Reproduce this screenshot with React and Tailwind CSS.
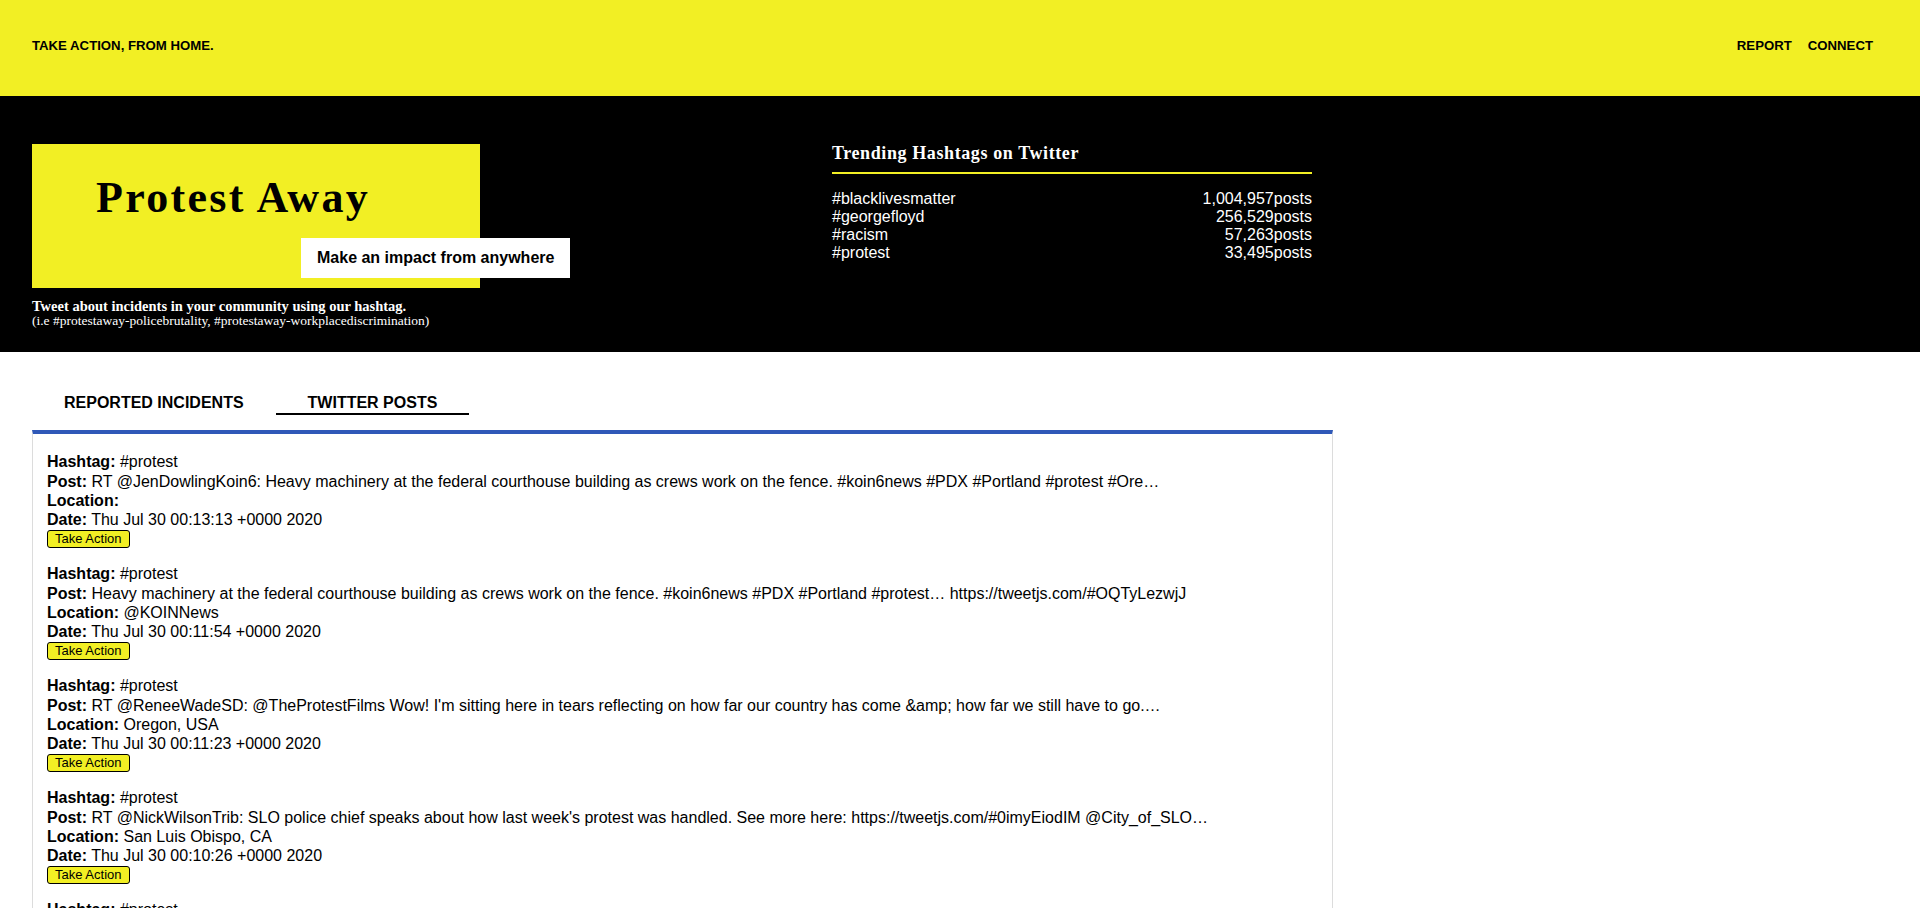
import React, { useState } from 'react';

const trending = [
  { tag: '#blacklivesmatter', count: '1,004,957' },
  { tag: '#georgefloyd', count: '256,529' },
  { tag: '#racism', count: '57,263' },
  { tag: '#protest', count: '33,495' },
];

const posts = [
  {
    hashtag: '#protest',
    post: 'RT @JenDowlingKoin6: Heavy machinery at the federal courthouse building as crews work on the fence. #koin6news #PDX #Portland #protest #Ore…',
    location: '',
    date: 'Thu Jul 30 00:13:13 +0000 2020',
  },
  {
    hashtag: '#protest',
    post: 'Heavy machinery at the federal courthouse building as crews work on the fence. #koin6news #PDX #Portland #protest… https://tweetjs.com/#OQTyLezwjJ',
    location: '@KOINNews',
    date: 'Thu Jul 30 00:11:54 +0000 2020',
  },
  {
    hashtag: '#protest',
    post: "RT @ReneeWadeSD: @TheProtestFilms Wow! I'm sitting here in tears reflecting on how far our country has come &amp; how far we still have to go.…",
    location: 'Oregon, USA',
    date: 'Thu Jul 30 00:11:23 +0000 2020',
  },
  {
    hashtag: '#protest',
    post: "RT @NickWilsonTrib: SLO police chief speaks about how last week's protest was handled. See more here: https://tweetjs.com/#0imyEiodIM @City_of_SLO…",
    location: 'San Luis Obispo, CA',
    date: 'Thu Jul 30 00:10:26 +0000 2020',
  },
  {
    hashtag: '#protest',
    post: 'RT @PDXzane: Protesters gather outside the Justice Center in downtown Portland again tonight. #PDX #Portland #protest…',
    location: 'Portland, OR',
    date: 'Thu Jul 30 00:09:41 +0000 2020',
  },
];

const sans = { fontFamily: '"Liberation Sans", Arial, sans-serif' };

const Header = () => (
  <div className="h-24 bg-[#f2ef24] flex justify-between items-start pt-[38px] pl-8 pr-[47px] text-[13.2px] leading-[15px] font-bold text-black">
    <span>TAKE ACTION, FROM HOME.</span>
    <nav className="flex gap-[16px]">
      <a href="#report">REPORT</a>
      <a href="#connect">CONNECT</a>
    </nav>
  </div>
);

const Hero = () => (
  <div className="h-64 bg-black flex pl-8 pt-12">
    <div className="w-[800px]">
      <div className="relative w-[448px] h-36 bg-[#f2ef24] pl-16 pt-8">
        <h1 className="font-['Liberation_Serif',serif] font-bold text-[44px] leading-[44px] tracking-[2.3px] text-black">
          Protest Away
        </h1>
        <div className="absolute left-[269px] top-[94px] h-10 px-4 flex items-center bg-white text-black text-base leading-[18px] font-bold whitespace-nowrap">
          Make an impact from anywhere
        </div>
      </div>
      <div className="mt-3 font-['Liberation_Serif',serif] text-white leading-[13.5px]">
        <p className="font-bold text-[14.5px]">Tweet about incidents in your community using our hashtag.</p>
        <p className="text-[13.5px]">(i.e #protestaway-policebrutality, #protestaway-workplacediscrimination)</p>
      </div>
    </div>
    <div className="w-[480px] text-white">
      <h2 className="font-['Liberation_Serif',serif] font-bold text-[18px] leading-[19.5px] tracking-[0.6px] pb-[8px] border-b-2 border-[#f2ef24]">
        Trending Hashtags on Twitter
      </h2>
      <ul className="mt-4 text-base leading-[18px]">
        {trending.map((t) => (
          <li key={t.tag} className="flex justify-between">
            <span>{t.tag}</span>
            <span>{t.count}posts</span>
          </li>
        ))}
      </ul>
    </div>
  </div>
);

const PostItem = ({ item }) => (
  <div className="mb-4">
    <div><b>Hashtag:</b> {item.hashtag}</div>
    <div className="whitespace-nowrap"><b>Post:</b> {item.post}</div>
    <div><b>Location:</b> {item.location}</div>
    <div><b>Date:</b> {item.date}</div>
    <div className="h-[19.2px] flex items-center">
      <button className="h-[18px] px-[7px] bg-[#f2ef24] border border-black rounded-[3px] text-[13px] leading-[16px] text-black">
        Take Action
      </button>
    </div>
  </div>
);

const App = () => {
  const [tab, setTab] = useState('twitter');
  return (
    <div className="min-h-screen bg-white text-black" style={sans}>
      <Header />
      <Hero />
      <div className="pl-8 pt-[42px]">
        <div className="flex text-base leading-[18.4px] font-bold">
          <button
            onClick={() => setTab('incidents')}
            className={'px-8 pb-[1px] border-b-2 ' + (tab === 'incidents' ? 'border-black' : 'border-transparent')}
          >
            REPORTED INCIDENTS
          </button>
          <button
            onClick={() => setTab('twitter')}
            className={'px-8 pb-[1px] border-b-2 ' + (tab === 'twitter' ? 'border-black' : 'border-transparent')}
          >
            TWITTER POSTS
          </button>
        </div>
        <div className="mt-[15px] w-[1301px] border border-[#dcdcdc] border-t-4 border-t-[#2f58b8] pt-[18px] pl-[14px] text-base leading-[19.2px]">
          {tab === 'twitter' ? (
            posts.map((p, i) => <PostItem key={i} item={p} />)
          ) : (
            <div className="pb-4">No reported incidents.</div>
          )}
        </div>
      </div>
    </div>
  );
};

export default App;
